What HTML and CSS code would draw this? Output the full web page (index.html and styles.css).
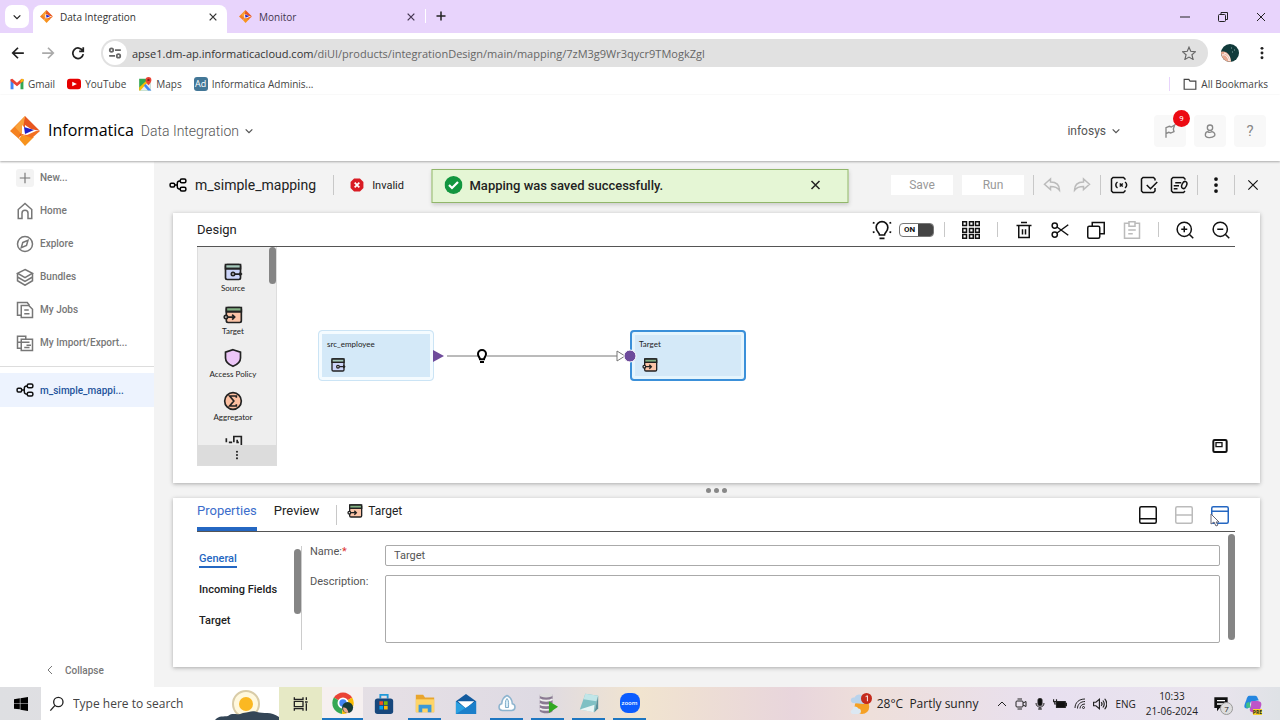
FILE: index.html
```
<!DOCTYPE html>
<html lang="en">
<head>
  <meta charset="UTF-8">
  <meta name="viewport" content="width=device-width, initial-scale=1.0">
  <title>Data Integration</title>
  <link rel="stylesheet" href="styles.css">
</head>
<body>
  <!-- shared icons -->
  <svg class="sprite" aria-hidden="true">
    <symbol id="logo" viewBox="0 0 30 30">
      <path d="M15 0 0 15l9 8 3-12z" fill="#f58220"/>
      <path d="M15 0 9 21l6-3V9l6 4 9 2z" fill="#e8571f"/>
      <path d="M15 0 5 11l7 8z" fill="#f9a13a"/>
      <path d="M15 30 9 23l3-4 12 2z" fill="#f7931e"/>
      <path d="M30 15 22 22l-9-3 11-4z" fill="#f37021"/>
      <path d="M12 9v9l5 1 9-4-12-4z" fill="#fff"/>
      <path d="m14 11 10 3-9 4z" fill="#1f1fc4"/>
    </symbol>
    <symbol id="x" viewBox="0 0 24 24"><path d="m4 4 16 16M20 4 4 20"/></symbol>
    <symbol id="plus" viewBox="0 0 24 24"><path d="M12 3v18M3 12h18"/></symbol>
    <symbol id="down" viewBox="0 0 24 24"><path d="m4 8 8 8 8-8"/></symbol>
    <symbol id="back" viewBox="0 0 24 24"><path d="M22 12H3m9-9-9 9 9 9"/></symbol>
    <symbol id="dots" viewBox="0 0 24 24"><g fill="currentColor" stroke="none"><circle cx="12" cy="4" r="2.500"/><circle cx="12" cy="12" r="2.500"/><circle cx="12" cy="20" r="2.500"/></g></symbol>
    <symbol id="mapping" viewBox="0 0 24 20"><rect x="1.500" y="7.500" width="6" height="5" rx="1.500"/><rect x="15" y="2" width="7.500" height="5" rx="2"/><rect x="15" y="13" width="7.500" height="5" rx="2"/><path d="M8 10h3m4-5.500c-4 0-4 2-4 5.500s0 5.500 4 5.500"/></symbol>
    <symbol id="source" viewBox="0 0 24 24"><rect x="3" y="3" width="18" height="18" rx="2" fill="var(--tile, none)"/><path d="M3 3h18v5H3z" fill="var(--band, none)"/><path d="M3 8h18M14 14.500h8m-2-2 2 2-2 2"/><circle cx="12" cy="14.500" r="2" fill="#fff"/></symbol>
    <symbol id="target" viewBox="0 0 24 24"><rect x="4" y="3" width="18" height="18" rx="2" fill="var(--tile, none)"/><path d="M4 3h18v5H4z" fill="var(--band, none)"/><path d="M4 8h18M6 14.500h8m-3-3 3 3-3 3"/><circle cx="3.500" cy="14.500" r="2" fill="#fff"/></symbol>
    <symbol id="bulb" viewBox="0 0 24 24"><path d="M9 17c0-3-3-4-3-8a6 6 0 0 1 12 0c0 4-3 5-3 8zM9 21h6"/></symbol>
  </svg>

  <div class="tabstrip">
    <button class="tab-search" aria-label="Search tabs"><svg class="icon i10 thick"><use href="#down"/></svg></button>
    <div class="tab active">
      <svg class="favicon"><use href="#logo"/></svg>
      <span>Data Integration</span>
      <button aria-label="Close tab"><svg class="icon i10"><use href="#x"/></svg></button>
    </div>
    <div class="tab">
      <svg class="favicon"><use href="#logo"/></svg>
      <span>Monitor</span>
      <button aria-label="Close tab"><svg class="icon i10"><use href="#x"/></svg></button>
    </div>
    <button class="new-tab" aria-label="New tab"><svg class="icon i12"><use href="#plus"/></svg></button>
    <div class="window-buttons">
      <button aria-label="Minimize"><svg class="icon i12" viewBox="0 0 24 24"><path d="M2 12h20"/></svg></button>
      <button aria-label="Restore"><svg class="icon i12" viewBox="0 0 24 24"><rect x="3" y="7" width="14" height="14" rx="2"/><path d="M8 6V3h13v14h-3"/></svg></button>
      <button aria-label="Close"><svg class="icon i12"><use href="#x"/></svg></button>
    </div>
  </div>

  <div class="navbar">
    <button aria-label="Back"><svg class="icon i14"><use href="#back"/></svg></button>
    <button class="faded" aria-label="Forward"><svg class="icon i14 flip"><use href="#back"/></svg></button>
    <button aria-label="Reload"><svg class="icon i14" viewBox="0 0 24 24"><path d="M20 8a9 9 0 1 0 1 6M21 2v7h-7"/></svg></button>
    <div class="address">
      <span class="site-info"><svg class="icon i14" viewBox="0 0 24 24"><circle cx="6" cy="7" r="3"/><path d="M12 7h10M2 17h10"/><circle cx="18" cy="17" r="3"/></svg></span>
      <span class="url"><b>apse1.dm-ap.informaticacloud.com</b>/diUI/products/integrationDesign/main/mapping/7zM3g9Wr3qycr9TMogkZgl</span>
      <button aria-label="Bookmark this tab"><svg class="icon i14" viewBox="0 0 24 24"><path d="m12 2 3 7 8 1-6 5 2 8-7-4-7 4 2-8-6-5 8-1z"/></svg></button>
    </div>
    <button aria-label="Profile"><svg class="avatar" viewBox="0 0 18 18"><circle cx="9" cy="9" r="9" fill="#113b3b"/><path d="M0 8c5-2 10 3 10 10C4 18 0 14 0 8z" fill="#e8a890"/><path d="M1 11c4-1 6 2 7 6M3 9c4 1 6 4 6 8" fill="none" stroke="#fff"/><path d="M10 4h1m2 2h1m-3 2h1" stroke="#8aa"/></svg></button>
    <button aria-label="Browser menu"><svg class="icon i14"><use href="#dots"/></svg></button>
  </div>

  <nav class="bookmarks" aria-label="Bookmarks">
    <a href="#gmail"><svg class="i14" viewBox="0 0 24 24"><path d="M1 4v17h5V10z" fill="#4285f4"/><path d="M23 4v17h-5V10z" fill="#34a853"/><path d="M1 7V4l3-1 8 7 8-7 3 1v3l-11 9z" fill="#ea4335"/><path d="M18 5v5l5-3V4l-2-1z" fill="#fbbc04"/></svg>Gmail</a>
    <a href="#youtube"><svg class="i14" viewBox="0 0 24 24"><rect y="3" width="24" height="18" rx="5" fill="#e60000"/><path d="m9 8 8 4-8 4z" fill="#fff"/></svg>YouTube</a>
    <a href="#maps"><svg class="i14" viewBox="0 0 24 24"><path d="M2 3h20v20H2z" fill="#34a853"/><path d="m2 23 20-20v20z" fill="#e8eaed"/><path d="m2 18 16-15h4L4 23H2z" fill="#fbbc04"/><path d="m10 15 3-3 10 11h-6z" fill="#4285f4"/><path d="M18 0a5 5 0 0 1 5 5c0 4-5 9-5 9s-5-5-5-9a5 5 0 0 1 5-5z" fill="#ea4335"/><circle cx="18" cy="5" r="2" fill="#8c1d18"/></svg>Maps</a>
    <a href="#admin"><span class="ad">Ad</span>Informatica Adminis...</a>
    <a class="all" href="#all"><svg class="icon i14" viewBox="0 0 24 24"><path d="M2 4h8l2 3h10v14H2z"/></svg>All Bookmarks</a>
  </nav>

  <header class="app-header">
    <svg class="brand-logo"><use href="#logo"/></svg>
    <span class="brand">Informatica</span>
    <button class="product">Data Integration <svg class="icon i10"><use href="#down"/></svg></button>
    <button class="org">infosys <svg class="icon i10"><use href="#down"/></svg></button>
    <div class="header-buttons">
      <button aria-label="Notifications"><svg class="icon i16" viewBox="0 0 24 24"><path d="M6 22V7l5-2 3 1 5-3-2 6 1 4-5 2-3-1-4 2"/></svg><span class="badge">9</span></button>
      <button aria-label="User"><svg class="icon i16" viewBox="0 0 24 24"><circle cx="12" cy="7" r="4"/><path d="M5 18c0-3 2-5 4-5 2 2 4 1 6 0 3 1 5 3 4 6-4 4-14 4-14-1z"/></svg></button>
      <button class="help" aria-label="Help">?</button>
    </div>
  </header>

  <div class="app">
    <nav class="sidebar" aria-label="Main">
      <a href="#new"><svg class="icon i18 new"><use href="#plus"/></svg>New...</a>
      <a href="#home"><svg class="icon i18" viewBox="0 0 24 24"><path d="M3 22V10l9-8 9 8v12h-5v-7a4 4 0 0 0-8 0v7z"/></svg>Home</a>
      <a href="#explore"><svg class="icon i18" viewBox="0 0 24 24"><circle cx="12" cy="12" r="10"/><path d="m9 10 7-3-2 7-7 3z"/></svg>Explore</a>
      <a href="#bundles"><svg class="icon i18" viewBox="0 0 24 24"><path d="m12 2 10 5-10 6L2 7z"/><path d="M2 7v10l10 6 10-6V7M2 12l10 6 10-6"/></svg>Bundles</a>
      <a href="#jobs"><svg class="icon i18" viewBox="0 0 24 24"><path d="M7 19H2V2h13l3 4"/><path d="M7 6h10l5 5v11H7zM11 12h6m-6 5h7"/></svg>My Jobs</a>
      <a href="#import"><svg class="icon i18" viewBox="0 0 24 24"><path d="M7 19H2V3h11v3M7 7h15v15H7zM11 11h7m-7 7h7M3 11h8m3 4h6"/></svg>My Import/Export...</a>
      <a class="current" href="#mapping"><svg class="icon i18"><use href="#mapping"/></svg>m_simple_mappi...</a>
      <button class="collapse"><svg class="icon i12 left"><use href="#down"/></svg>Collapse</button>
    </nav>

    <main class="content">
      <div class="titlebar">
        <svg class="icon i18"><use href="#mapping"/></svg>
        <h1>m_simple_mapping</h1>
        <i class="sep"></i>
        <span class="status"><svg class="i14" viewBox="0 0 24 24"><path d="M7 1h10l6 6v10l-6 6H7l-6-6V7z" fill="#d91c24"/><path d="m8 8 8 8m0-8-8 8" stroke="#fff" stroke-width="3"/></svg>Invalid</span>
        <div class="actions">
          <button class="btn">Save</button>
          <button class="btn">Run</button>
          <i class="sep"></i>
          <div class="group faded">
            <button aria-label="Undo"><svg class="icon i18" viewBox="0 0 24 24"><path d="m2 11 8-7v4c8 0 12 3 12 11-3-4-6-5-12-5v4z"/></svg></button>
            <button aria-label="Redo"><svg class="icon i18 flip" viewBox="0 0 24 24"><path d="m2 11 8-7v4c8 0 12 3 12 11-3-4-6-5-12-5v4z"/></svg></button>
          </div>
          <i class="sep"></i>
          <div class="group">
            <button aria-label="Parameters"><svg class="icon i18" viewBox="0 0 24 24"><path d="M20 5V4l-2-2H4L2 4v16l2 2h14l2-2v-1M10 8c-3 2-3 6 0 8m10-8c3 2 3 6 0 8m-7-6 4 4m0-4-4 4"/></svg></button>
            <button aria-label="Validate"><svg class="icon i18" viewBox="0 0 24 24"><path d="M20 6V4l-2-2H4L2 4v16l2 2h14l2-2v-4M9 12l5 5 9-9"/></svg></button>
            <button aria-label="Run details"><svg class="icon i18" viewBox="0 0 24 24"><path d="M20 5V4l-2-2H4L2 4v16l2 2h14l2-2M7 9h8m-10 4h7m-7 4h5"/><ellipse cx="19" cy="12" rx="3" ry="5" transform="rotate(25 19 12)"/></svg></button>
          </div>
          <i class="sep"></i>
          <button aria-label="More"><svg class="icon i18"><use href="#dots"/></svg></button>
          <i class="sep"></i>
          <button class="close" aria-label="Close mapping"><svg class="icon i14"><use href="#x"/></svg></button>
        </div>
      </div>

      <section class="panel design">
        <div class="panel-head">
          <h2>Design</h2>
          <div class="tools">
            <svg class="icon i20" viewBox="0 0 24 24"><path d="M9 18c0-3-4-4-4-9a7 7 0 0 1 14 0c0 5-4 6-4 9zM9 22h6M1 3l2 1m20-1-2 1M1 15l2-1m20 1-2-1"/></svg>
            <label class="switch"><span>ON</span><input type="checkbox" aria-label="Recommendations" checked></label>
            <i class="sep"></i>
            <button aria-label="Arrange"><svg class="icon i18" viewBox="0 0 24 24"><path d="M1 1h5v5H1zM10 1h5v5h-5zM18 1h5v5h-5zM1 10h5v5H1zM10 10h5v5h-5zM18 10h5v5h-5zM1 18h5v5H1zM10 18h5v5h-5zM18 18h5v5h-5z"/></svg></button>
            <i class="sep"></i>
            <button aria-label="Delete"><svg class="icon i18" viewBox="0 0 24 24"><path d="M2 6h20M5 6v16h14V6M8 2h8M10 11v7m4-7v7"/></svg></button>
            <button aria-label="Cut"><svg class="icon i18" viewBox="0 0 24 24"><circle cx="5" cy="6" r="3.500"/><circle cx="5" cy="18" r="3.500"/><path d="m8 8 15 11M8 16 23 5"/></svg></button>
            <button aria-label="Copy"><svg class="icon i18" viewBox="0 0 24 24"><rect x="1" y="7" width="16" height="16" rx="2"/><path d="M7 7V2h16v15h-6"/></svg></button>
            <button class="faded" aria-label="Paste"><svg class="icon i18" viewBox="0 0 24 24"><path d="M8 3H2v20h20V3h-6M8 1h8v6H8zM7 12h10M7 17h6"/></svg></button>
            <i class="sep"></i>
            <button aria-label="Zoom in"><svg class="icon i18" viewBox="0 0 24 24"><circle cx="11" cy="11" r="9.500"/><path d="m18 18 5 5M11 7v8m-4-4h8"/></svg></button>
            <button aria-label="Zoom out"><svg class="icon i18" viewBox="0 0 24 24"><circle cx="11" cy="11" r="9.500"/><path d="m18 18 5 5M7 11h8"/></svg></button>
          </div>
        </div>
        <div class="workspace">
          <aside class="palette">
            <div class="palette-list">
              <button><svg class="icon i20 src"><use href="#source"/></svg>Source</button>
              <button><svg class="icon i20 tgt"><use href="#target"/></svg>Target</button>
              <button><svg class="icon i20" viewBox="0 0 24 24"><path d="m12 2 9 3v7c0 5-4 8-9 10-5-2-9-5-9-10V5z" fill="#ecc6f7"/></svg>Access Policy</button>
              <button><svg class="icon i20" viewBox="0 0 24 24"><circle cx="12" cy="12" r="10" fill="#fcbfa0"/><path d="M16 8V6H8l5 6-5 6h8v-2"/></svg>Aggregator</button>
              <button aria-label="Cleanse"><svg class="icon i20" viewBox="0 0 24 24"><path d="M4 5v5m3 0h4M13 10V3h9v14h-8M17 7v3h2"/></svg></button>
              <span class="scroll"></span>
            </div>
            <button class="palette-more" aria-label="More transformations"><svg class="icon i10"><use href="#dots"/></svg></button>
          </aside>
          <div class="canvas">
            <div class="node source-node"><span>src_employee</span><svg class="icon i16 src"><use href="#source"/></svg></div>
            <div class="node target-node"><span>Target</span><svg class="icon i16 tgt"><use href="#target"/></svg></div>
            <svg class="link" viewBox="0 0 204 20"><path d="m0 4 11 6-11 6z" fill="#6e4b9b"/><path d="M14 10h170" stroke="#777"/><path d="m184 5 8 5-8 5z" fill="#fff" stroke="#777"/><circle cx="197" cy="10" r="6" fill="#6e4b9b" stroke="#fff"/><rect x="45" y="4" width="9" height="12" fill="#fff"/></svg>
            <svg class="icon i16 thick hint"><use href="#bulb"/></svg>
            <button class="overview" aria-label="Overview"><svg class="icon i16" viewBox="0 0 24 24"><rect x="2" y="3" width="20" height="18" rx="2" stroke-width="3"/><path d="M6 7h9v6H6z"/></svg></button>
          </div>
        </div>
      </section>

      <div class="splitter"><i></i><i></i><i></i></div>

      <section class="panel properties">
        <div class="panel-head">
          <button class="prop-tab selected">Properties</button>
          <button class="prop-tab">Preview</button>
          <i class="sep"></i>
          <span class="selected-object"><svg class="icon i16 tgt"><use href="#target"/></svg>Target</span>
          <div class="tools">
            <button aria-label="Minimize panel"><svg class="icon i18" viewBox="0 0 24 24"><rect x="1" y="1" width="22" height="22" rx="2"/><path d="M1 17h22"/></svg></button>
            <button class="faded" aria-label="Split panels"><svg class="icon i18" viewBox="0 0 24 24"><rect x="1" y="1" width="22" height="22" rx="2"/><path d="M1 12h22"/></svg></button>
            <button class="blue" aria-label="Maximize panel"><svg class="icon i18" viewBox="0 0 24 24"><rect x="1" y="1" width="22" height="22" rx="2"/><path d="M1 7h22"/></svg><svg class="cursor" viewBox="0 0 10 14"><path d="M1 1v10l3-2 2 4 2-1-2-3h3z" fill="#fff" stroke="#667"/></svg></button>
          </div>
        </div>
        <div class="prop-body">
          <nav class="prop-nav" aria-label="Properties">
            <a class="on" href="#general">General</a>
            <a href="#incoming">Incoming Fields</a>
            <a href="#target-tab">Target</a>
            <span class="scroll"></span>
          </nav>
          <form class="fields">
            <label for="name">Name:<em>*</em></label>
            <input id="name" type="text" value="Target">
            <label for="description">Description:</label>
            <textarea id="description"></textarea>
          </form>
          <span class="scroll"></span>
        </div>
      </section>
    </main>

    <div class="toast" role="status">
      <svg class="i18" viewBox="0 0 24 24"><circle cx="12" cy="12" r="12" fill="#12963f"/><path d="m6 12 4 4 8-8" fill="none" stroke="#fff" stroke-width="3"/></svg>
      <span>Mapping was saved successfully.</span>
      <button aria-label="Dismiss"><svg class="icon i12"><use href="#x"/></svg></button>
    </div>
  </div>

  <footer class="taskbar">
    <button class="task" aria-label="Start"><svg class="i14" viewBox="0 0 24 24"><path d="m0 4 10-2v9H0zM11 2l13-2v11H11zM0 12h10v9L0 20zM11 12h13v12l-13-2z"/></svg></button>
    <label class="search">
      <svg class="icon i16" viewBox="0 0 24 24"><circle cx="14" cy="9" r="7"/><path d="m9 14-7 8"/></svg>
      <input type="text" placeholder="Type here to search" aria-label="Type here to search">
      <svg class="sun" viewBox="0 0 64 32"><circle cx="31" cy="16" r="13" fill="#fff8dd" stroke="#d9cca8" stroke-width="2"/><circle cx="31" cy="16" r="7" fill="#fbb822"/><path d="M0 32c4-5 9-3 13-4 5-4 9 0 15-3 7-1 9-3 14-1 6 2 14-1 22 5v3z" fill="#344657"/></svg>
    </label>
    <button class="task view" aria-label="Task view"><svg class="icon i16" viewBox="0 0 24 24"><path d="M2 2v3h13V2M2 22v-3h13v3M2 8h13v8H2zM20 2v4m0 5v11M18 9h4"/></svg></button>
    <button class="task front" aria-label="Chrome"><svg class="i22" viewBox="0 0 24 24"><path d="M12 12 2 6a12 12 0 0 1 20 0z" fill="#ea4335"/><path d="M12 12 2 6a12 12 0 0 0 9 18z" fill="#34a853"/><path d="M12 12 22 6a12 12 0 0 1-11 18z" fill="#fbbc04"/><circle cx="12" cy="12" r="6" fill="#fff"/><circle cx="12" cy="12" r="4" fill="#4285f4"/><circle cx="17" cy="17" r="6" fill="#163c3a"/><path d="M12 17c4 0 5 2 6 6-4 0-6-2-6-6z" fill="#e8a890"/></svg></button>
    <button class="task" aria-label="Store"><svg class="i22" viewBox="0 0 24 24"><path d="M8 6V2h8v4" fill="none" stroke="#2299d8" stroke-width="2"/><rect x="2" y="6" width="20" height="17" rx="3" fill="#17477c"/><path d="M7 9h4v4H7z" fill="#f25022"/><path d="M12 9h4v4h-4z" fill="#7fba00"/><path d="M7 14h4v4H7z" fill="#00a4ef"/><path d="M12 14h4v4h-4z" fill="#ffb900"/></svg></button>
    <button class="task open" aria-label="File Explorer"><svg class="i22" viewBox="0 0 24 24"><path d="M2 3h8l2 3h10v16H2z" fill="#e8a52e"/><path d="M2 8h20v14H2z" fill="#ffd568"/><path d="M5 22v-8h14v8h-4v-4H9v4z" fill="#3b99d8"/></svg></button>
    <button class="task" aria-label="Mail"><svg class="i22" viewBox="0 0 24 24"><path d="m12 1 11 8v14H1V9z" fill="#125a9e"/><path d="M3 9h18l-9 8z" fill="#fff"/><path d="m1 9 11 8 11-8v14H1z" fill="#2a9fe0"/><path d="m1 23 22-14v14z" fill="#1b7fca"/></svg></button>
    <button class="task open" aria-label="Secure Agent"><svg class="i18" viewBox="0 0 24 24"><path d="M6 22c-6 0-6-8-1-9 0-5 3-9 7-11 4 2 7 6 7 11 5 1 5 9-1 9z" fill="#fff" stroke="#8db4cf" stroke-width="2"/><path d="M12 6c3 3 2 7 2 12h-4c0-5-1-9 2-12z" fill="#d9edf8" stroke="#5d94b8"/></svg></button>
    <button class="task open" aria-label="SQL Developer"><svg class="i22" viewBox="0 0 24 24"><path d="M3 3h14v18c-3 3-11 3-14 0z" fill="#8a7a92"/><ellipse cx="10" cy="3.500" rx="7" ry="2.500" fill="#ddd"/><path d="M3 8c3 2 11 2 14 0M3 13c3 2 11 2 14 0M3 18c3 2 11 2 14 0" fill="none" stroke="#eee" stroke-width="2"/><path d="m13 10 10 6-10 7z" fill="#31a821"/></svg></button>
    <button class="task open" aria-label="Notepad"><svg class="i22" viewBox="0 0 24 24"><path d="m8 2 14 2-4 18-16-3z" fill="#7fc0c4"/><path d="m8 2 14 2-2 6-14-2z" fill="#c1e6e8"/><path d="m2 19 16-5-1 8z" fill="#e9f5f5"/><path d="m18 22 4-18v14z" fill="#598f99"/></svg></button>
    <button class="task open" aria-label="Zoom"><span class="zoom-app">zoom</span></button>
    <div class="tray">
      <button class="weather"><svg class="i22" viewBox="0 0 24 24"><circle cx="13" cy="15" r="8" fill="#f5a024"/><path d="M3 11c-3-1-3-7 2-6 2-5 9-4 9 0 5 0 4 7 1 7z" fill="#b9d3ec"/><path d="M3 18c0-4 4-4 6-1 4 0 4 6 0 6H4c-4 0-4-4-1-5z" fill="#dce8f3"/><circle cx="18" cy="6" r="6" fill="#c42b1c"/><path d="m17 4 2-1v6" fill="none" stroke="#fff"/></svg>28°C&nbsp; Partly sunny</button>
      <div class="tray-icons">
        <svg class="icon i12 up"><use href="#down"/></svg>
        <svg class="icon i12" viewBox="0 0 24 24"><rect x="2" y="6" width="14" height="12" rx="2"/><path d="m16 10 6-3v10l-6-3M5 2h9M5 22h9"/></svg>
        <svg class="icon i12" viewBox="0 0 24 24"><rect x="8" y="1" width="8" height="14" rx="3" fill="#111"/><path d="M4 10c0 11 16 11 16 0M12 18v5M8 22h8"/></svg>
        <svg class="icon i14" viewBox="0 0 24 24"><path d="M6 8h15v10H6zM21 11h2v4h-2z" fill="#111"/><path d="M1 4v4h5V4M3 8v4h3"/></svg>
        <svg class="icon i12" viewBox="0 0 24 24"><path d="M2 20C2 9 10 2 22 2M7 21C7 13 13 7 22 7M12 21c0-5 4-9 10-9"/><circle cx="19" cy="19" r="2"/></svg>
        <svg class="icon i14" viewBox="0 0 24 24"><path d="M1 9h4l6-5v16l-6-5H1zM14 9c2 2 2 4 0 6m3-9c3 4 3 8 0 12m3-15c5 6 5 12 0 18"/></svg>
      </div>
      <span class="lang">ENG</span>
      <time class="clock" datetime="2024-06-21T10:33"><span>10:33</span><span>21-06-2024</span></time>
      <button class="notes" aria-label="Notifications"><svg class="i16" viewBox="0 0 24 24"><path d="M2 2h20v16H10l-4 5v-5H2z" fill="#111"/><path d="M6 7h12M6 12h12" stroke="#fff" stroke-width="2"/></svg><span>7</span></button>
      <button class="copilot" aria-label="Copilot"><svg class="i18" viewBox="0 0 24 24"><path d="M7 1h8c3 0 3 4 5 6L9 9c-2 6-2 9-5 9-6 0-3-6-1-11 1-4 2-6 4-6z" fill="#2486e0"/><path d="M10 8h8c6 0 6 5 4 9-1 4-2 6-5 6h-6c-3 0-4-3-3-6 2-1 1-5 2-9z" fill="#bd55c9"/><path d="M3 17h6l-2-8-4 2z" fill="#42bf84"/></svg><span>PRE</span></button>
    </div>
  </footer>
</body>
</html>
```
FILE: styles.css
```
:root {
  --chrome: #e8d4fc;
  --page: #f3f3f3;
  --ink: #222;
  --blue: #2467c2;
  --line: #c8c8c8;
  --ui: "Open Sans", "Noto Sans", sans-serif;
}
*, *::before, *::after { box-sizing: border-box; margin: 0; padding: 0; }
body {
  display: flex;
  flex-direction: column;
  height: 100vh;
  overflow: hidden;
  font-family: Roboto, sans-serif;
  font-size: 12px;
  color: var(--ink);
  background: #fff;
}
button {
  display: flex;
  align-items: center;
  justify-content: center;
  border: 0;
  background: none;
  font: inherit;
  color: inherit;
}
a { color: inherit; text-decoration: none; }
h1, h2 { font-weight: 400; }
svg { flex: none; }
.sprite { position: absolute; width: 0; height: 0; }
.icon {
  fill: none;
  stroke: currentColor;
  stroke-width: 2;
}
.thick { stroke-width: 3; }
.flip { transform: scaleX(-1); }
.left { transform: rotate(90deg); }
.up { transform: rotate(180deg); }
.i10 { width: 10px; height: 10px; }
.i12 { width: 12px; height: 12px; }
.i14 { width: 14px; height: 14px; }
.i16 { width: 16px; height: 16px; }
.i18 { width: 18px; height: 18px; }
.i20 { width: 20px; height: 20px; }
.i22 { width: 22px; height: 22px; }
.src { --tile: #ccd5fa; --band: #a5c9bb; }
.tgt { --tile: #fcc5a8; --band: #83b083; }
.faded { color: #bbb; }
.sep {
  width: 1px;
  height: 20px;
  background: var(--line);
}
.scroll {
  width: 7px;
  border-radius: 4px;
  background: #858585;
}

/* browser */
.tabstrip {
  display: flex;
  align-items: flex-end;
  flex: none;
  height: 33px;
  padding-left: 5px;
  background: var(--chrome);
  font-family: var(--ui);
  font-size: 10px;
}
.tab-search {
  width: 24px;
  height: 23px;
  margin: 0 4px 5px 0;
  border-radius: 7px;
  background: #fff;
}
.tab {
  display: flex;
  align-items: center;
  gap: 7px;
  width: 198px;
  height: 28px;
  padding: 0 9px 5px 12px;
  color: #433650;
}
.tab.active {
  width: 194px;
  padding-left: 7px;
  border-radius: 8px 8px 0 0;
  background: #fff;
  color: #333;
}
.tab button { margin-left: auto; }
.tab .icon, .new-tab .icon { stroke-width: 3; }
.favicon { width: 13px; height: 13px; }
.new-tab {
  height: 14px;
  margin-bottom: 10px;
  padding-left: 9px;
  border-left: 1px solid #fff;
}
.window-buttons {
  display: flex;
  gap: 26px;
  margin: 0 13px 10px auto;
}
.navbar {
  display: flex;
  align-items: center;
  flex: none;
  gap: 16px;
  height: 40px;
  padding: 0 11px;
}
.navbar .icon { stroke-width: 3; }
.navbar > .faded { color: #aaa; }
.address {
  display: flex;
  align-items: center;
  flex: 1;
  gap: 5px;
  height: 28px;
  margin-right: -3px;
  padding: 0 12px 0 2px;
  border-radius: 14px;
  background: #e1e1e1;
  color: #666;
  font-family: var(--ui);
  font-size: 11px;
}
.address b { font-weight: 400; color: #333; }
.address button { margin-left: auto; }
.address button .icon { stroke-width: 2; }
.site-info {
  display: grid;
  place-items: center;
  width: 24px;
  height: 24px;
  border-radius: 50%;
  background: #fff;
}
.avatar { width: 18px; height: 18px; }
.bookmarks {
  display: flex;
  align-items: center;
  flex: none;
  gap: 12px;
  height: 22px;
  padding: 0 12px 0 10px;
  font-family: var(--ui);
  font-size: 10px;
  color: #444;
}
.bookmarks a {
  display: flex;
  align-items: center;
  gap: 4px;
}
.bookmarks .all {
  margin-left: auto;
  padding-left: 13px;
  border-left: 1px solid var(--chrome);
}
.ad {
  width: 14px;
  border-radius: 3px;
  background: #437797;
  color: #fff;
  font-size: 9px;
  line-height: 14px;
  text-align: center;
}

/* application header */
.app-header {
  display: flex;
  align-items: center;
  flex: none;
  z-index: 1;
  height: 66px;
  padding: 5px 14px 0 10px;
  background: #fff;
  box-shadow: 0 1px 2px #aaa;
}
.brand-logo { width: 30px; height: 30px; }
.brand {
  margin: 0 7px 2px 8px;
  font-family: var(--ui);
  font-size: 16px;
  font-weight: 500;
  color: #000;
}
.product, .org { gap: 5px; color: #555; }
.product { font-size: 14px; font-weight: 300; }
.product .icon, .org .icon { stroke-width: 3; }
.org { margin: 0 33px 0 auto; }
.header-buttons {
  display: flex;
  gap: 8px;
}
.header-buttons button {
  position: relative;
  width: 32px;
  height: 32px;
  border-radius: 4px;
  background: #f8f8f8;
  color: #888;
}
.header-buttons .help { font-size: 15px; }
.badge {
  position: absolute;
  top: -5px;
  right: -4px;
  width: 17px;
  height: 17px;
  margin-top: -16px;
  border-radius: 50%;
  background: #ec0b13;
  color: #fff;
  font-size: 8px;
  line-height: 17px;
}
.header-buttons .badge { margin-top: 0; }

/* application body */
.app {
  position: relative;
  display: flex;
  flex: 1;
  min-height: 0;
  background: var(--page);
}
.sidebar {
  display: flex;
  flex-direction: column;
  width: 154px;
  background: #fff;
  font-size: 10px;
  font-weight: 500;
  color: #777;
}
.sidebar a {
  display: flex;
  align-items: center;
  gap: 6px;
  height: 33px;
  padding-left: 16px;
}
.sidebar .new {
  padding: 2px;
  border-radius: 3px;
  background: #f3f3f3;
}
.sidebar .current {
  position: relative;
  height: 34px;
  margin-top: 14px;
  background: #edf3fe;
  color: #24539c;
}
.sidebar .current::before {
  content: "";
  position: absolute;
  top: -7px;
  left: 0;
  right: 0;
  border-top: 1px solid #ddd;
}
.current .icon { color: #111; }
.collapse {
  gap: 9px;
  margin: auto auto 11px 44px;
}
.content {
  display: flex;
  flex-direction: column;
  flex: 1;
  min-width: 0;
  padding: 0 20px 20px 19px;
}
.titlebar {
  display: flex;
  align-items: center;
  flex: none;
  height: 52px;
  padding: 0 0 4px;
  margin: 0 0 0 -4px;
}
.titlebar h1 {
  margin: 0 17px 0 8px;
  font-size: 14px;
}
.titlebar > .icon { color: #000; }
.status {
  display: flex;
  align-items: center;
  gap: 8px;
  margin-left: 16px;
  font-size: 11px;
}
.actions {
  display: flex;
  align-items: center;
  gap: 9px;
  margin-left: auto;
  color: #111;
}
.group { display: flex; gap: 12px; }
.group.faded { color: #bbb; }
.close { padding-left: 2px; }
.btn {
  width: 62px;
  height: 20px;
  background: #fff;
  color: #999;
  font-size: 12px;
}
.panel {
  display: flex;
  flex-direction: column;
  padding: 0 25px 0 24px;
  background: #fff;
  box-shadow: 0 1px 4px #aaa;
}
.panel-head {
  display: flex;
  align-items: center;
  flex: none;
  height: 34px;
  border-bottom: 1px solid #555;
}
h2 { font-size: 13px; }
.tools {
  display: flex;
  align-items: center;
  gap: 18px;
  margin-left: auto;
  padding-right: 5px;
  color: #111;
}
.tools .sep { height: 15px; margin: 0 -1px; }
.switch {
  display: flex;
  align-items: center;
  justify-content: space-between;
  width: 35px;
  height: 14px;
  margin: 0 -7px 0 -11px;
  padding-left: 4px;
  border: 1px solid #777;
  border-radius: 4px;
  overflow: hidden;
  font-size: 8px;
  font-weight: 700;
}
.switch input {
  appearance: none;
  width: 15px;
  height: 14px;
  background: #444;
}
.design {
  flex: 1;
  min-height: 0;
}
.workspace {
  display: flex;
  flex: 1;
  min-height: 0;
}
.palette {
  display: flex;
  flex-direction: column;
  width: 80px;
  margin-bottom: 17px;
  border: 1px solid #ddd;
  border-top: 0;
  background: #eee;
}
.palette-list {
  position: relative;
  flex: 1;
  min-height: 0;
  padding: 15px 8px 0 0;
  overflow: hidden;
  font-family: Lato, sans-serif;
  font-size: 8px;
}
.palette-list button {
  flex-direction: column;
  justify-content: flex-start;
  gap: 1px;
  width: 100%;
  height: 32px;
  margin-bottom: 11px;
}
.palette-list .scroll {
  position: absolute;
  top: 0;
  right: 0;
  height: 37px;
}
.palette-more {
  height: 20px;
  background: #dcdcdc;
}
.canvas {
  position: relative;
  flex: 1;
}
.node {
  position: absolute;
  top: 83px;
  width: 116px;
  height: 51px;
  padding: 8px;
  border: 1px solid #cbe4f5;
  border-radius: 4px;
  background: #d4e9f8;
  box-shadow: inset 0 0 0 3px #f4fbff;
  font-family: Lato, sans-serif;
  font-size: 8px;
}
.node span { display: block; line-height: 10px; }
.node .icon { margin: 8px 0 0 3px; }
.source-node { left: 41px; }
.target-node {
  left: 353px;
  border: 2px solid #3b90d9;
  padding: 7px;
  box-shadow: inset 0 0 0 3px #e5f5fd;
}
.link {
  position: absolute;
  top: 99px;
  left: 156px;
  width: 204px;
  height: 20px;
  fill: none;
}
.hint {
  position: absolute;
  top: 101px;
  left: 197px;
  color: #000;
}
.overview {
  position: absolute;
  right: 7px;
  bottom: 29px;
  color: #111;
}
.splitter {
  display: flex;
  align-items: center;
  justify-content: center;
  flex: none;
  gap: 3px;
  height: 15px;
}
.splitter i {
  width: 5px;
  height: 5px;
  border-radius: 50%;
  background: #888;
}

/* properties */
.properties { flex: none; height: 169px; }
.prop-tab {
  align-self: stretch;
  margin-right: 17px;
  padding-bottom: 8px;
  border-top: 4px solid transparent;
  border-bottom: 4px solid transparent;
  font-size: 13px;
}
.prop-tab.selected { border-bottom-color: var(--blue); color: #3b6dcb; }
.selected-object {
  display: flex;
  align-items: center;
  gap: 5px;
  margin: 0 0 8px 10px;
  font-size: 12px;
}
.properties .blue { position: relative; color: var(--blue); }
.cursor {
  position: absolute;
  top: 7px;
  left: -1px;
  width: 10px;
  height: 14px;
}
.properties .tools { padding-right: 6px; }
.prop-body {
  display: flex;
  flex: 1;
  padding-top: 2px;
  font-size: 11px;
}
.prop-nav {
  position: relative;
  display: flex;
  flex-direction: column;
  align-items: flex-start;
  width: 105px;
  margin: 12px 8px 17px 0;
  padding: 6px 2px;
  gap: 15px;
  border-right: 1px solid #ccc;
  font-weight: 500;
}
.prop-nav a { line-height: 14px; border-bottom: 2px solid transparent; }
.prop-nav .on { color: var(--blue); border-color: var(--blue); }
.prop-nav .scroll {
  position: absolute;
  top: 3px;
  right: 0;
  height: 65px;
}
.fields {
  display: grid;
  grid-template-columns: 75px 1fr;
  grid-template-rows: 21px 68px;
  flex: 1;
  gap: 9px 0;
  padding-top: 11px;
  color: #555;
}
.fields em { color: #d33; font-style: normal; }
.fields input, .fields textarea {
  width: 100%;
  padding: 0 8px;
  border: 1px solid #aaa;
  border-radius: 2px;
  background: #fff;
  color: #555;
  font: inherit;
  resize: none;
}
.prop-body > .scroll { height: 106px; margin-left: 8px; }
.toast {
  position: absolute;
  top: 8px;
  left: 50%;
  display: flex;
  align-items: center;
  gap: 7px;
  width: 417px;
  height: 34px;
  padding: 0 26px 2px 12px;
  transform: translateX(-50%);
  border: 1px solid #91b66b;
  background: #e5f6d5;
  box-shadow: 0 2px 4px #ccc;
  color: #222;
  font-size: 13px;
  font-weight: 500;
}
.toast button { margin-left: auto; }
.toast .icon { stroke-width: 3; }

/* taskbar */
.taskbar {
  display: flex;
  flex: none;
  height: 33px;
  background: linear-gradient(90deg, #dedfe2 0, #e5dfe5 31%, #dedae3 42%, #f1e4cf 50%, #e8d5dc 62%, #eedfda 68%, #e8e0f0 82%, #e9e4ed 95%, #dfe2e6 100%);
  color: #222;
  font-family: var(--ui);
  font-size: 12px;
}
.task { flex: none; width: 41px; }
.view { width: 43px; background: #e6e9c5; }
.open { width: 33px; margin: 0 4px; }
.open, .front { border-bottom: 2px solid #1d76c1; }
.front { background: #f6f0f0; }
.search {
  display: flex;
  align-items: center;
  flex: none;
  gap: 8px;
  width: 238px;
  padding-left: 8px;
  background: #fff;
}
.search input {
  flex: 1;
  min-width: 0;
  border: 0;
  font: inherit;
}
.search input::placeholder { color: #444; opacity: 1; }
.sun { width: 64px; height: 32px; align-self: flex-end; }
.zoom-app {
  width: 20px;
  border-radius: 8px;
  background: #0b5cff;
  color: #fff;
  font-size: 6px;
  font-weight: 600;
  line-height: 20px;
}
.tray {
  display: flex;
  align-items: center;
  flex: none;
  margin-left: auto;
  padding-right: 18px;
}
.weather { gap: 5px; margin-right: 18px; }
.tray-icons {
  display: flex;
  align-items: center;
  gap: 7px;
}
.lang { margin: 0 10px 0 8px; font-size: 10px; }
.clock {
  font-size: 10px;
  line-height: 15px;
  text-align: center;
}
.clock span { display: block; }
.notes, .copilot { position: relative; margin-left: 15px; }
.notes span {
  position: absolute;
  top: 6px;
  left: 7px;
  width: 13px;
  border: 1px solid #999;
  border-radius: 50%;
  background: #ddd;
  font-size: 8px;
  line-height: 11px;
}
.copilot span {
  position: absolute;
  right: 0;
  bottom: -2px;
  background: #f6d22c;
  font-size: 5px;
  font-weight: 700;
  line-height: 6px;
}
```
